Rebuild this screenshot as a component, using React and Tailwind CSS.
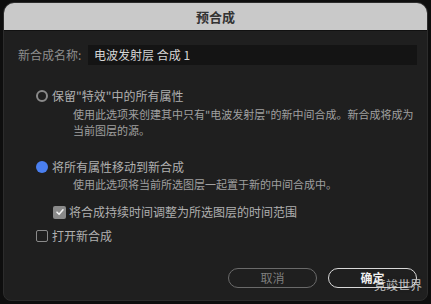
import React from "react";

export default function App() {
  const font = { fontFamily: '"Noto Sans CJK SC", "Noto Sans", sans-serif' };
  return (
    <div className="w-[431px] h-[304px] bg-[#0e0e0e] pt-[2px] px-[3px] pb-[3px]" style={font}>
      <div className="h-full rounded-t-[11px] rounded-b-[8px] overflow-hidden flex flex-col bg-[#1f1f1f] border border-[#2c2c2c]">
        <div className="h-[28px] bg-[#c9c9c9] flex items-center justify-center border-b border-[#111]">
          <span className="text-[13px] font-bold text-[#333] leading-none">预合成</span>
        </div>
        <div className="flex-1 flex flex-col px-[14px] pt-[14px] relative">
          <div className="flex items-center h-[20px]">
            <span className="text-[12px] text-[#8e8e8e] w-[70px] leading-none">新合成名称:</span>
            <div className="flex-1 h-[20px] bg-[#141414] flex items-center pl-[6px] mr-[-4px]">
              <span className="text-[12px] text-[#d6d6d6] leading-none">电波发射层 合成 1</span>
            </div>
          </div>

          <div className="pl-[18px] mt-[23px]">
            <div className="flex items-center h-[16px]">
              <span className="w-[12px] h-[12px] rounded-full border-2 border-[#8a8a8a] mr-[4px]"></span>
              <span className="text-[12px] text-[#b0b0b0] leading-none">保留"特效"中的所有属性</span>
            </div>
            <div className="pl-[37px] mt-[2px] text-[11px] text-[#a0a0a0] leading-[16px] w-[380px]">
              使用此选项来创建其中只有"电波发射层"的新中间合成。新合成将成为<br />当前图层的源。
            </div>

            <div className="flex items-center h-[16px] mt-[21px]">
              <span className="w-[12px] h-[12px] rounded-full bg-[#4a7ff0] mr-[4px]"></span>
              <span className="text-[12px] text-[#b0b0b0] leading-none">将所有属性移动到新合成</span>
            </div>
            <div className="pl-[37px] mt-[1px] text-[11px] text-[#a0a0a0] leading-[16px]">
              使用此选项将当前所选图层一起置于新的中间合成中。
            </div>

            <div className="flex items-center h-[16px] mt-[12px] pl-[17px]">
              <span className="w-[13px] h-[13px] rounded-[2px] bg-[#8a8a8a] mr-[3px] flex items-center justify-center">
                <svg width="10" height="10" viewBox="0 0 10 10">
                  <path d="M2 5.2 L4.1 7.3 L8 2.8" stroke="#f2f2f2" strokeWidth="1.6" fill="none" strokeLinecap="round" strokeLinejoin="round" />
                </svg>
              </span>
              <span className="text-[12px] text-[#b0b0b0] leading-none">将合成持续时间调整为所选图层的时间范围</span>
            </div>

            <div className="flex items-center h-[16px] mt-[8px]">
              <span className="w-[12px] h-[12px] rounded-[2px] border-[1.5px] border-[#8a8a8a] mr-[4px]"></span>
              <span className="text-[12px] text-[#b0b0b0] leading-none">打开新合成</span>
            </div>
          </div>

          <div className="flex justify-end gap-[11px] mt-[24px] mr-[-4px]">
            <div className="w-[89px] h-[20px] rounded-full border-[1.5px] border-[#6a6a6a] flex items-center justify-center">
              <span className="text-[12px] text-[#7e7e7e] leading-none">取消</span>
            </div>
            <div className="w-[89px] h-[20px] rounded-full border-[1.5px] border-[#d8d8d8] flex items-center justify-center relative">
              <span className="text-[12px] text-[#f0f0f0] font-bold leading-none">确定</span>
              <span className="absolute right-[-6px] top-[10px] text-[12px] text-[#d0d0d0] leading-none opacity-90">竞竣世界</span>
            </div>
          </div>
        </div>
      </div>
    </div>
  );
}
